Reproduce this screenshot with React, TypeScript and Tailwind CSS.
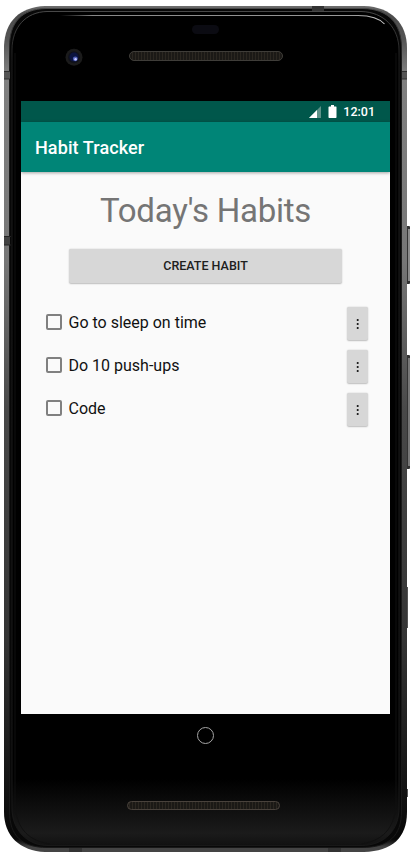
import React from "react";

const habits = ["Go to sleep on time", "Do 10 push-ups", "Code"];

function PhoneFrame() {
  return (
    <svg className="absolute inset-0" width="410" height="853" viewBox="0 0 410 853" aria-hidden="true">
      <defs>
        <linearGradient id="metal" x1="0" y1="0" x2="0" y2="1">
          <stop offset="0" stopColor="#6e6e6e" />
          <stop offset="0.01" stopColor="#4c4c4c" />
          <stop offset="0.04" stopColor="#555555" />
          <stop offset="0.08" stopColor="#808080" />
          <stop offset="0.3" stopColor="#777777" />
          <stop offset="0.48" stopColor="#484848" />
          <stop offset="0.75" stopColor="#343434" />
          <stop offset="0.9" stopColor="#171717" />
          <stop offset="0.985" stopColor="#070707" />
          <stop offset="0.994" stopColor="#444444" />
          <stop offset="1" stopColor="#444444" />
        </linearGradient>
        <linearGradient id="glass" x1="0" y1="0" x2="0" y2="1">
          <stop offset="0" stopColor="#000000" />
          <stop offset="0.92" stopColor="#000000" />
          <stop offset="0.985" stopColor="#1b1b1b" />
          <stop offset="1" stopColor="#111111" />
        </linearGradient>
        <linearGradient id="shine" x1="0" y1="0" x2="1" y2="0">
          <stop offset="0" stopColor="#777" stopOpacity="0" />
          <stop offset="0.1" stopColor="#888" />
          <stop offset="0.9" stopColor="#999" />
          <stop offset="1" stopColor="#ccc" />
        </linearGradient>
        <linearGradient id="rim" x1="0" y1="0" x2="0" y2="1">
          <stop offset="0" stopColor="#484848" />
          <stop offset="0.06" stopColor="#1d1d1d" />
          <stop offset="1" stopColor="#181818" />
        </linearGradient>
        <pattern id="mesh" width="3" height="10" patternUnits="userSpaceOnUse">
          <rect width="3" height="10" fill="#1b1916" />
          <rect width="1" height="10" fill="#2b2721" />
        </pattern>
      </defs>
      <rect x="404" y="226" width="6" height="58" rx="1" fill="#333" />
      <rect x="408" y="229" width="2" height="52" fill="#8b8b8b" />
      <rect x="404" y="355" width="6" height="114" rx="1" fill="#333" />
      <rect x="408" y="358" width="2" height="108" fill="#777" />
      <rect x="405" y="587" width="3" height="41" fill="#555" />
      <rect x="405" y="789" width="3" height="8" fill="#555" />
      <path d="M45 6H364C392 7 407 24 407 48V812C407 838 392 851 364 852H45C20 851 4 836 4 812V46C5 21 20 7 45 6Z" fill="url(#metal)" />
      <path d="M46 8.500H363C388 9 401.500 23 401.500 48V811C401.500 836 389 847.500 362 847.500H47C22 847.500 9.500 836 9.500 811V47C9.500 22 22 9 46 8.500Z" fill="#080808" stroke="url(#rim)" />
      <path d="M47 11.500H361C384 12 399 28 399 50V808C399 830 385 845.500 361 845.500H48C27 845.500 12 830 12 808V50C12 27 26 12 47 11.500Z" fill="url(#glass)" stroke="url(#rim)" />
      <path d="M15 53V806C17 829 29 841 50 844" fill="none" stroke="#101010" />
      <path d="M396 53V806C394 829 382 841 361 844" fill="none" stroke="#101010" />
      <path d="M60 15.500H358Q377 15.700 384.500 24" fill="none" stroke="url(#shine)" strokeWidth="1.100" />
      <path d="M4 71H10V79H4ZM402 71H407V79H402Z" fill="#555" />
      <path d="M4 71.500H10M4 79H10M402 71.500H407M402 79H407" stroke="#303030" />
      <path d="M4 236H10V245H4Z" fill="#414141" />
      <path d="M4 236.500H11M4 245H11" stroke="#242424" />
      <path d="M312 6H324V11H312ZM69 848H82V852H69ZM328 848H341V852H328Z" fill="#333" />
      <rect x="192" y="25" width="27" height="9" rx="4.500" fill="#0b0b12" />
      <circle cx="74" cy="57.300" r="8.500" fill="#1b1b1b" />
      <circle cx="74" cy="57.300" r="6" fill="#10111a" />
      <circle cx="74" cy="57" r="4.500" fill="#0b1440" />
      <circle cx="75.300" cy="58.800" r="2.400" fill="#5260b8" />
      <circle cx="75.600" cy="59.200" r="1.200" fill="#c5ccff" />
      <rect x="129.500" y="51.500" width="153" height="9" rx="4.500" fill="url(#mesh)" stroke="#3f3d39" />
      <rect x="127.500" y="801.500" width="152" height="8" rx="4" fill="url(#mesh)" stroke="#49423c" />
    </svg>
  );
}

function HabitRow({ name }: { name: string }) {
  return (
    <li className="flex h-[43px] items-center">
      <label className="flex flex-1 items-center pb-[3px]">
        <input type="checkbox" className="m-0 size-4 appearance-none rounded-[2px] border-2 border-[#808080] bg-transparent" />
        <span className="ml-[6.500px] pt-[2px] text-[16px] leading-5 text-[#111]">{name}</span>
      </label>
      <button aria-label="Habit options" className="flex h-[33px] w-[21px] items-center justify-center rounded-[2px] bg-[#d7d7d7] shadow-[0_0.500px_1.500px_rgba(0,0,0,0.250)]">
        <svg width="4" height="12" viewBox="0 0 4 12" fill="#111">
          <circle cx="1.700" cy="2" r="1.050" />
          <circle cx="1.700" cy="6" r="1.050" />
          <circle cx="1.700" cy="10" r="1.050" />
        </svg>
      </button>
    </li>
  );
}

export default function App() {
  return (
    <div className="relative h-[853px] w-[410px] overflow-hidden bg-white font-['Roboto',sans-serif]">
      <PhoneFrame />
      <div className="relative pl-[21px] pt-[101px]">
        <main className="flex h-[613px] w-[369px] flex-col bg-[#fafafa]">
          <div className="flex h-[21px] shrink-0 items-center justify-end bg-[#00574b] pr-[15px] text-white">
            <svg width="12" height="12" viewBox="0 0 12 12">
              <path d="M12 0V12H0Z" fill="#5d9188" />
              <path d="M8 4V12H0Z" fill="white" />
            </svg>
            <svg className="ml-[7px]" width="9" height="13" viewBox="0 0 9 13" fill="white">
              <path d="M3 0H6V1.500H8Q8.500 1.500 8.500 2.200V12.300Q8.500 13 7.800 13H1.200Q.5 13 .5 12.300V2.200Q.5 1.500 1.200 1.500H3Z" />
            </svg>
            <span className="ml-[6px] pt-px text-[12.500px] font-medium leading-5">12:01</span>
          </div>
          <header className="flex h-[50px] shrink-0 items-center bg-[#008577] pl-[14px] pt-[2px] shadow-[0_1px_3px_rgba(0,0,0,0.350)]">
            <h1 className="text-[18px] font-medium leading-6 tracking-[0.1px] text-white">Habit Tracker</h1>
          </header>
          <h2 className="mt-[19px] text-center text-[33px] leading-10 tracking-[-0.250px] text-[#757575]">Today's Habits</h2>
          <button className="mx-auto mt-[18px] h-[34px] w-[273px] shrink-0 rounded-[2px] bg-[#d7d7d7] text-[12.500px] font-medium leading-4 text-[#202020] shadow-[0_0.500px_1.500px_rgba(0,0,0,0.250)]">
            CREATE HABIT
          </button>
          <ul className="mt-[19px] pl-[25px] pr-[22px]">
            {habits.map((h) => <HabitRow key={h} name={h} />)}
          </ul>
        </main>
        <nav className="flex w-[369px] justify-center pr-px pt-[13px]">
          <button aria-label="Home" className="size-[17px] rounded-full border border-[#a5a5a5]" />
        </nav>
      </div>
    </div>
  );
}
